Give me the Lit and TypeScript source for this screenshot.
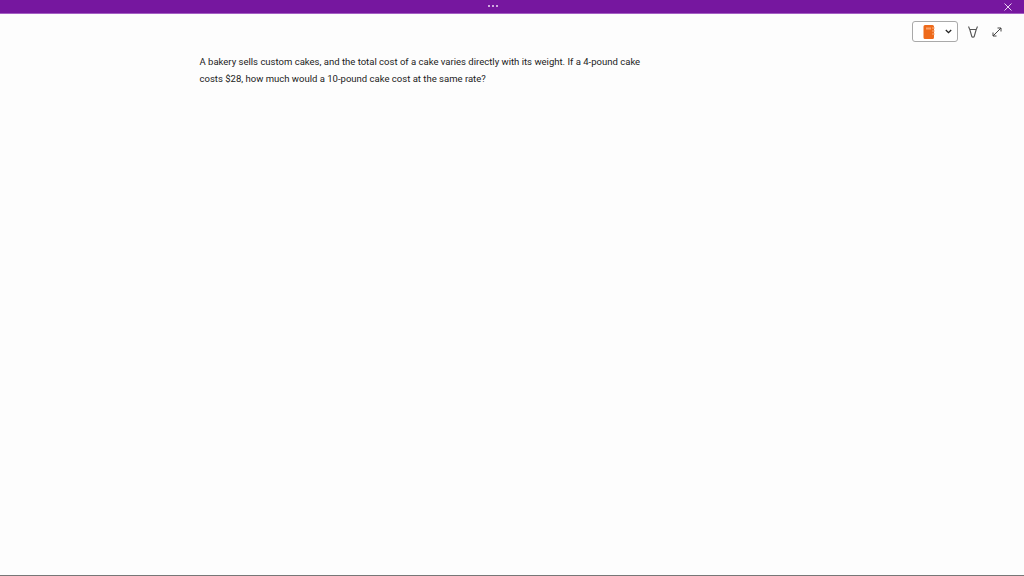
import { LitElement, html, css } from "lit";
import { customElement } from "lit/decorators.js";

@customElement("app-root")
export class AppRoot extends LitElement {
  static styles = css`
    :host { display: flex; flex-direction: column; width: 1024px; height: 576px; background: #fdfdfd; overflow: hidden; font-family: "Roboto", "Liberation Sans", sans-serif; }
    .titlebar { flex: none; height: 13px; background: #76179f; border-bottom: 1px solid #a45fc4; display: flex; justify-content: space-between; align-items: center; padding: 0 12px 0 488px; }
    .dots { display: flex; gap: 2px; padding-bottom: 1px; }
    .dots i { width: 2px; height: 2px; background: #eedcf5; border-radius: 50%; }
    .close { display: flex; }
    .toolbar { flex: none; display: flex; justify-content: flex-end; align-items: center; padding: 7px 22px 0 0; height: 21px; }
    .picker { width: 46px; height: 21px; box-sizing: border-box; border: 1px solid #a9a9a9; border-radius: 3px; background: #fff; display: flex; align-items: center; padding-left: 10px; gap: 10px; }
    .tool { display: flex; margin-left: 10px; }
    .tool + .tool { margin-left: 14px; }
    .question { flex: none; margin: 0; padding: 11px 0 0 199.5px; width: 445px; box-sizing: content-box; font-size: 9.52px; line-height: 17px; color: #222; }
    .spacer { flex: 1; }
    .bottom { flex: none; height: 1px; background: #777; }
  `;

  render() {
    return html`
      <div class="titlebar">
        <div class="dots"><i></i><i></i><i></i></div>
        <span class="close">
          <svg width="8" height="8" viewBox="0 0 8 8"><path d="M.5.5l7 7M7.5.5l-7 7" stroke="#e9d3f2" stroke-width="1" fill="none"/></svg>
        </span>
      </div>
      <div class="toolbar">
        <div class="picker">
          <svg width="12" height="14" viewBox="0 0 12 14">
            <path d="M2 0H9.500A1.500 1.500 0 0 1 11 1.500V12.500A1.500 1.500 0 0 1 9.500 14H2A1.500 1.500 0 0 1 .5 12.500V1.500A1.500 1.500 0 0 1 2 0Z" fill="#ee6a1b"/>
            <path d="M9 3h3M9 6h3M9 9h3" stroke="#f7b58c" stroke-width="1"/>
            <rect x="3" y="2.500" width="5" height="2" fill="#f9a36c"/>
          </svg>
          <svg width="7" height="5" viewBox="0 0 7 5"><path d="M.8 1l2.700 2.700L6.200 1" stroke="#222" stroke-width="1.300" fill="none"/></svg>
        </div>
        <span class="tool">
          <svg width="10" height="12" viewBox="0 0 10 12"><path d="M.5.5C1.500 3 1.700 3.200 1.800 3.500H8.200C8.300 3.200 8.500 3 9.500.5M1.800 3.500L3.800 10.500C4 11.300 6 11.300 6.200 10.500L8.200 3.500" stroke="#555" stroke-width="1.100" fill="none"/></svg>
        </span>
        <span class="tool">
          <svg width="10" height="10" viewBox="0 0 10 10"><path d="M1 9L9 1M5.500 1H9V4.500M1 5.500V9H4.500" stroke="#444" stroke-width="1" fill="none"/></svg>
        </span>
      </div>
      <p class="question">A bakery sells custom cakes, and the total cost of a cake varies directly with its weight. If a 4-pound cake costs $28, how much would a 10-pound cake cost at the same rate?</p>
      <div class="spacer"></div>
      <div class="bottom"></div>
    `;
  }
}
